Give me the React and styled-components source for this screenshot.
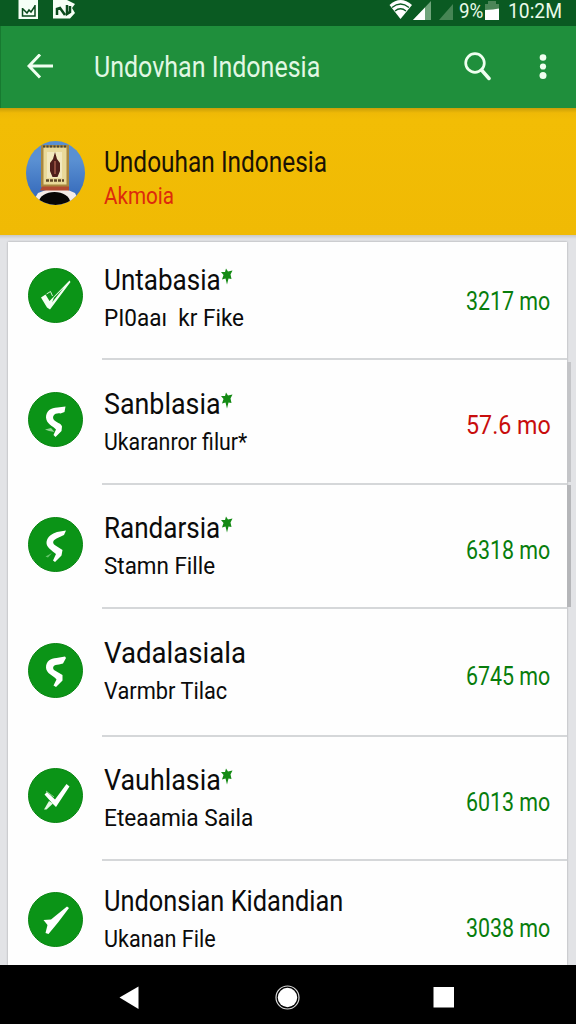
import styled, { createGlobalStyle } from "styled-components";

const GlobalStyle = createGlobalStyle`
  * {
    box-sizing: border-box;
  }

  body {
    margin: 0;
    font-family: Roboto, "Liberation Sans", sans-serif;
    background-color: #e2e3e6;
  }
`;

const Screen = styled.div`
  width: 576px;
  height: 1024px;
  display: flex;
  flex-direction: column;
  overflow: hidden;
  background-color: #e2e3e6;
`;

// Keeps a line of text at its own height but condenses it horizontally
const Line = styled.span`
  display: block;
  width: max-content;
  white-space: pre;
  font-size: ${({ $size }) => $size}px;
  line-height: ${({ $height }) => $height}px;
  color: ${({ $color }) => $color || "#0b0b0b"};
  transform: scaleX(${({ $squeeze }) => $squeeze || 1});
  transform-origin: left center;
`;

const StatusBar = styled.div`
  flex: none;
  height: 26px;
  display: flex;
  justify-content: space-between;
  background-color: #0a5a22;
  padding: 0 14px 0 18px;

  svg {
    display: block;
  }
`;

const StatusGroup = styled.div`
  display: flex;
`;

const Clock = styled.div`
  width: 54px;
  margin-left: 8px;
`;

const Percent = styled.div`
  width: 26px;
  margin-left: 5px;
`;

const AppBar = styled.header`
  flex: none;
  height: 82px;
  display: flex;
  align-items: center;
  background-color: #1f8f3c;
  border-left: 1px solid #177a30;
  padding: 0 29px 0 26px;

  svg {
    display: block;
  }
`;

const BarTitle = styled.div`
  flex: 1;
  margin-left: 40px;
`;

const MoreButton = styled.div`
  margin-left: 48px;
`;

const Banner = styled.section`
  flex: none;
  height: 127px;
  display: flex;
  background: linear-gradient(#c99f08, #efb906 5px, #f2bd05 12px, #f0ba04);
  padding: 33px 26px 0;
`;

const BannerText = styled.div`
  margin: 3px 0 0 18px;
`;

const Body = styled.main`
  flex: 1;
  min-height: 0;
  display: flex;
  padding: 7px 0 0 8px;
  background: linear-gradient(#c9c9c6, #e2e3e6 4px);
`;

const List = styled.ul`
  width: 559px;
  margin: 0;
  padding: 0;
  list-style: none;
  background-color: #fefefe;
  box-shadow: 0 0 2px rgba(0, 0, 0, 0.3);
`;

const Row = styled.li`
  height: ${({ $height }) => $height}px;
  display: flex;
  align-items: flex-start;
  padding-left: 20px;
`;

const Status = styled.div`
  flex: none;
  width: 55px;
  height: 55px;
  margin-top: ${({ $top }) => $top}px;
  border-radius: 50%;
  background-color: #0b9417;
  border: 1px solid #078510;

  svg {
    display: block;
    margin: -1px;
  }
`;

const Content = styled.div`
  flex: 1;
  height: 100%;
  margin-left: 19px;
  display: flex;
  justify-content: space-between;
  border-bottom: ${({ $last }) => ($last ? "none" : "2px solid #d5d7d9")};
`;

const Names = styled.div`
  padding: ${({ $top }) => $top}px 0 0 2px;
`;

const TitleLine = styled.div`
  display: flex;
  height: 39px;

  svg {
    flex: none;
    margin-top: 7px;
  }
`;

const TitleText = styled.div`
  width: 117px;
`;

const Amount = styled.div`
  width: 101px;
  padding-top: ${({ $top }) => $top}px;
`;

const ScrollTrack = styled.div`
  width: 9px;
  display: flex;
  flex-direction: column;
  gap: 3px;
  padding-top: 120px;
`;

const ScrollPiece = styled.div`
  width: 4px;
  height: ${({ $height }) => $height}px;
  background-color: ${({ $dark }) => ($dark ? "#b5b6b9" : "#c4c5c8")};
`;

const NavBar = styled.nav`
  flex: none;
  height: 59px;
  background-color: #000;

  svg {
    display: block;
  }
`;

const rows = [
  {
    title: "Untabasia",
    titleSqueeze: 0.868,
    star: true,
    sub: "PI0aaı  kr Fike",
    subSqueeze: 0.92,
    amount: "3217 mo",
    height: 118,
    top: 19,
    iconTop: 26,
    amountTop: 44,
    icon: "tick",
  },
  {
    title: "Sanblasia",
    titleSqueeze: 0.895,
    star: true,
    sub: "Ukaranror filur*",
    subSqueeze: 0.87,
    amount: "57.6 mo",
    amountSqueeze: 0.93,
    red: true,
    height: 125,
    top: 25,
    iconTop: 32,
    amountTop: 50,
    icon: "hook",
  },
  {
    title: "Randarsia",
    titleSqueeze: 0.868,
    star: true,
    sub: "Stamn Fille",
    subSqueeze: 0.915,
    amount: "6318 mo",
    height: 124,
    top: 24,
    iconTop: 32,
    amountTop: 50,
    icon: "bolt",
  },
  {
    title: "Vadalasiala",
    titleSqueeze: 0.92,
    sub: "Varmbr Tilac",
    subSqueeze: 0.89,
    amount: "6745 mo",
    height: 128,
    top: 25,
    iconTop: 34,
    amountTop: 52,
    icon: "curl",
  },
  {
    title: "Vauhlasia",
    titleSqueeze: 0.895,
    star: true,
    sub: "Eteaamia Saila",
    subSqueeze: 0.925,
    amount: "6013 mo",
    height: 124,
    top: 24,
    iconTop: 31,
    amountTop: 50,
    icon: "check",
  },
  {
    title: "Undonsian Kidandian",
    titleSqueeze: 0.846,
    sub: "Ukanan File",
    subSqueeze: 0.882,
    amount: "3038 mo",
    height: 104,
    top: 21,
    iconTop: 31,
    amountTop: 52,
    icon: "dart",
  },
];

const glyphs = {
  tick: (
    <>
      <path d="M13 29.500L17.500 26.500L21.500 33L41.500 12.500L42.500 14L22 41.500L19 39.500Z" fill="#f4fff2" />
      <path d="M26 29.500L36 19.500L24 34.500Z" fill="#0b9417" />
      <path d="M18.500 26L22.500 23.500L24.500 28" stroke="#d9f3d8" fill="none" />
    </>
  ),
  hook: (
    <>
      <path d="M37.500 14.500L36.500 20L32.500 21.500C26.500 20.500 23.500 24.500 26 28C28 30.500 33 31 34 34.500L33.500 39L27.500 45L25.500 43L28 37.500C25 34 18.500 32 18 25.500C18 19 23 15.500 29.500 15.500Z" fill="#fff" />
      <path d="M17 37.500L23 36L26.500 40L21 39Z" fill="#8fd491" />
    </>
  ),
  bolt: (
    <>
      <path d="M38 13.500L36 18L28.500 21.500C24 24 24.500 26.500 27.500 28.500L34.500 33L33.500 38.500L27 45L25 43.500L28 37C24 33.500 18 30.500 18.500 25C19.500 19 24 17 29 15Z" fill="#fff" />
      <path d="M17.500 39.500L24 36L20 40.500Z" fill="#67c46b" />
    </>
  ),
  curl: (
    <path d="M38 15L35 20.500L31 21.500C25.500 21.500 24 24.500 26 27L34.500 32V37.500L28 44L25.500 42.500L28.500 36.500C25.500 32.500 18 30.500 18 24.500C18 18.500 22.500 15 28.500 15L37 13.500Z" fill="#fff" />
  ),
  check: (
    <>
      <path d="M16.500 26.500L19 24L27 31.500L38.500 16L41.500 18.500L28 39L24.500 35.500Z" fill="#fff" />
      <path d="M16 41.500L21 33L25 35.500L18.500 41.500Z" fill="#e4f8e3" />
      <path d="M18 23L26 29" stroke="#8fd491" fill="none" />
    </>
  ),
  dart: (
    <path d="M15.500 28L23 27.500L39 14.500L41 16L30 30.500L20.500 42L17.500 41L19.500 33Z" fill="#fff" />
  ),
};

function Star() {
  return (
    <svg width="13" height="18" viewBox="0 0 13 18">
      <path
        d="M5 0.500L7 3.500L11.500 2.500L9.500 6.500L10.500 11L7.500 10.500L6 16.500L4.500 10.500L1 11.500L2.500 7L0 4L4 4Z"
        fill="#148a14"
      />
    </svg>
  );
}

function Avatar() {
  return (
    <svg width="60" height="64" viewBox="0 0 60 64">
      <defs>
        <clipPath id="avatar">
          <ellipse cx="29.500" cy="32" rx="29.500" ry="32" />
        </clipPath>
        <linearGradient id="sky" x2="0" y2="1">
          <stop offset="0.3" stopColor="#5a90d2" />
          <stop offset="0.8" stopColor="#3a6fbe" />
        </linearGradient>
      </defs>
      <g clipPath="url(#avatar)">
        <rect width="60" height="64" fill="url(#sky)" />
        <path d="M5 64L12 52L20 49L42 49L49 52L55 64Z" fill="#f5ece8" />
        <ellipse cx="28.500" cy="61" rx="15.500" ry="10" fill="#080605" />
        <rect x="15" y="4" width="28" height="42" fill="#a8873f" />
        <rect x="17.500" y="6.500" width="23" height="37" fill="#e9d99a" />
        <path d="M17 5.500H41" stroke="#4a4638" strokeWidth="2" strokeDasharray="2 1.500" />
        <rect x="21" y="11" width="15" height="26" fill="#f2e8bd" />
        <path d="M29 11L31 18L34 22V30L31.500 36H26.500L24 30V22L27 18Z" fill="#4f1f1a" />
        <path d="M29 20V33" stroke="#8d4a3c" strokeWidth="2" />
        <path d="M20 39.500H38" stroke="#5c4526" strokeWidth="2.500" strokeDasharray="3 1" />
        <path d="M16 45.500H43V49.500H14Z" fill="#b14b32" />
      </g>
    </svg>
  );
}

export default function App() {
  return (
    <Screen>
      <GlobalStyle />
      <StatusBar>
        <svg width="60" height="26" viewBox="0 0 60 26">
          <path d="M0.500 0H20V19H0.500Z" fill="#f6fff6" />
          <path d="M4.500 8V16H17V5M5 9L9 13L11 10L13 12L17 6" stroke="#0a4a1c" strokeWidth="1.500" fill="none" />
          <path d="M35 0H49L57 4L54 8L57 13L52 18.500H35Z" fill="#f6fff6" />
          <path d="M39 15V9L42 8L47 15M49 5V14L52 12V6" stroke="#0a4a1c" strokeWidth="2.500" fill="none" />
        </svg>
        <StatusGroup>
          <svg width="65" height="26" viewBox="0 0 65 26">
            <path d="M0.500 5Q11.500 -5 23 5L11.500 19Z" fill="#fff" />
            <path d="M3 7.500Q11.500 0.500 20 7.500M6 11Q11.500 6.500 17 11" stroke="#0a5a22" strokeWidth="1.300" fill="none" />
            <path d="M24 20L42 1V20Z" fill="#6fa47b" />
            <path d="M24 20L36 7.500V20Z" fill="#fff" />
            <path d="M50 20L64 4V20Z" fill="#468554" />
          </svg>
          <Percent>
            <Line $size={20.5} $height={22} $squeeze={0.92} $color="#e9fbe9">
              9%
            </Line>
          </Percent>
          <svg width="15" height="26" viewBox="0 0 15 26">
            <path d="M3 1H11V4H14V20H0V4H3Z" fill="#4b8557" />
            <path d="M0 10L8 9.500L14 8.500V20H0Z" fill="#fff" />
          </svg>
          <Clock>
            <Line $size={20.5} $height={22} $squeeze={0.94} $color="#e9fbe9">
              10:2M
            </Line>
          </Clock>
        </StatusGroup>
      </StatusBar>
      <AppBar>
        <svg width="27" height="26" viewBox="0 0 27 26">
          <path d="M26 12H3M13 0.500L2 12L13 23.500" stroke="#effff0" strokeWidth="3" fill="none" />
        </svg>
        <BarTitle>
          <Line $size={29} $height={34} $squeeze={0.862} $color="#e2f8e4">
            Undovhan Indonesia
          </Line>
        </BarTitle>
        <svg width="27" height="30" viewBox="0 0 27 30">
          <circle cx="11" cy="11" r="9.300" stroke="#effff0" strokeWidth="2.700" fill="none" />
          <path d="M17.500 18L25 26.500" stroke="#effff0" strokeWidth="3.500" strokeLinecap="round" />
        </svg>
        <MoreButton>
          <svg width="8" height="26" viewBox="0 0 8 26">
            <circle cx="4" cy="3.500" r="3.300" fill="#effff0" />
            <circle cx="4" cy="12.500" r="3.100" fill="#effff0" />
            <circle cx="4" cy="21.500" r="3.500" fill="#effff0" />
          </svg>
        </MoreButton>
      </AppBar>
      <Banner>
        <Avatar />
        <BannerText>
          <Line $size={29} $height={36} $squeeze={0.843} $color="#1a1205">
            Undouhan Indonesia
          </Line>
          <Line $size={24} $height={32} $squeeze={0.86} $color="#dd2a0c">
            Akmoia
          </Line>
        </BannerText>
      </Banner>
      <Body>
        <List>
          {rows.map((row, i) => (
            <Row key={row.title} $height={row.height}>
              <Status $top={row.iconTop}>
                <svg width="55" height="55" viewBox="0 0 55 55">
                  {glyphs[row.icon]}
                </svg>
              </Status>
              <Content $last={i === rows.length - 1}>
                <Names $top={row.top}>
                  <TitleLine>
                    <TitleText>
                      <Line $size={30} $height={38} $squeeze={row.titleSqueeze}>
                        {row.title}
                      </Line>
                    </TitleText>
                    {row.star && <Star />}
                  </TitleLine>
                  <Line $size={24.5} $height={36} $squeeze={row.subSqueeze}>
                    {row.sub}
                  </Line>
                </Names>
                <Amount $top={row.amountTop}>
                  <Line
                    $size={25}
                    $height={32}
                    $squeeze={row.amountSqueeze || 0.855}
                    $color={row.red ? "#c80d0d" : "#087d0c"}
                  >
                    {row.amount}
                  </Line>
                </Amount>
              </Content>
            </Row>
          ))}
        </List>
        <ScrollTrack>
          <ScrollPiece $height={120} />
          <ScrollPiece $height={122} $dark />
        </ScrollTrack>
      </Body>
      <NavBar>
        <svg width="576" height="59" viewBox="0 0 576 59">
          <path d="M119.500 32.500L138.500 21.500V44Z" fill="#fff" />
          <circle cx="287.500" cy="32.500" r="11.500" stroke="#d8d8d8" strokeWidth="1.200" fill="none" />
          <circle cx="287.500" cy="32.500" r="9.700" fill="#fff" />
          <rect x="433.500" y="22" width="20.500" height="20.500" fill="#fff" />
        </svg>
      </NavBar>
    </Screen>
  );
}
